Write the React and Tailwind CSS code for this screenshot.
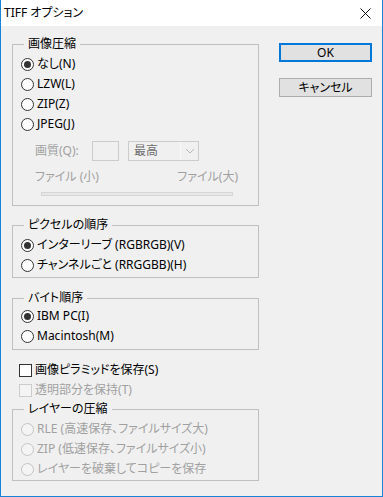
import React from 'react';

const font = "font-['Noto_Sans','Noto_Sans_CJK_JP',sans-serif] [font-feature-settings:'palt']";

const Radio = ({ checked, disabled, label }) => (
  <div className="flex h-[20px] items-center">
    <span
      className={`flex h-[13px] w-[13px] items-center justify-center rounded-full border ${
        disabled ? 'border-[#c4c4c4] bg-[#f4f4f4]' : 'border-[#333333] bg-white'
      }`}
    >
      {checked && <span className="h-[7px] w-[7px] rounded-full bg-[#333333]" />}
    </span>
    <span className={`ml-[3px] text-[12px] leading-[16px] ${disabled ? 'text-[#a0a0a0]' : 'text-black'}`}>{label}</span>
  </div>
);

const Check = ({ disabled, label }) => (
  <div className="flex h-[20px] items-center">
    <span
      className={`h-[13px] w-[13px] border ${disabled ? 'border-[#cccccc] bg-[#f4f4f4]' : 'border-[#333333] bg-white'}`}
    />
    <span className={`ml-[3px] text-[12px] leading-[16px] ${disabled ? 'text-[#a0a0a0]' : 'text-black'}`}>{label}</span>
  </div>
);

const Group = ({ title, className = '', children }) => (
  <fieldset className={`border border-[#c0c0c0] pl-[8px] pr-[8px] ${className}`}>
    <legend className="ml-[3px] px-[4px] text-[12px] leading-[16px] text-black">{title}</legend>
    {children}
  </fieldset>
);

export default function App() {
  return (
    <div className={`${font} flex h-[497px] w-[383px] flex-col border-x border-b border-[#1883d7] bg-[#f0f0f0]`}>
      <div className="flex h-[26px] shrink-0 items-center justify-between bg-white pl-[3px] pr-[10px]">
        <span className="text-[12px] text-black">TIFF オプション</span>
        <svg width="11" height="11" viewBox="0 0 11 11" className="mr-[1px]">
          <path d="M0.5 0.5 L10.5 10.5 M10.5 0.5 L0.5 10.5" stroke="#111" strokeWidth="1" />
        </svg>
      </div>

      <div className="flex pl-[11px]">
        <div className="w-[247px]">
          <Group title="画像圧縮" className="mt-[10px] pb-[9px]">
            <div className="mt-[2px]">
              <Radio checked label="なし(N)" />
              <Radio label="LZW(L)" />
              <Radio label="ZIP(Z)" />
              <Radio label="JPEG(J)" />
            </div>
            <div className="mt-[7px] flex h-[20px] items-center pl-[14px]">
              <span className="w-[57px] text-[12px] text-[#a0a0a0]">画質(Q):</span>
              <span className="h-[20px] w-[27px] border border-[#cccccc] bg-[#f0f0f0]" />
              <div className="ml-[9px] flex h-[20px] w-[71px] items-center border border-[#cccccc] bg-[#f0f0f0]">
                <span className="flex h-[18px] w-[52px] items-center border-r border-[#f8f8f8] pl-[5px] text-[12px] text-[#6d6d6d]">最高</span>
                <svg width="10" height="6" viewBox="0 0 10 6" className="ml-[4px]">
                  <path d="M1 1 L5 5 L9 1" fill="none" stroke="#b8b8b8" strokeWidth="1" />
                </svg>
              </div>
            </div>
            <div className="mt-[8px] flex justify-between pl-[14px] pr-[12px] text-[12px] leading-[16px] text-[#a0a0a0]">
              <span>ファイル (小)</span>
              <span>ファイル(大)</span>
            </div>
            <div className="ml-[20px] mr-[17px] mt-[7px] h-[4px] border border-[#d6d6d6] bg-[#e7e7e7]" />
          </Group>

          <Group title="ピクセルの順序" className="mt-[11px] pb-[2px]">
            <div className="mt-[2px]">
              <Radio checked label="インターリーブ (RGBRGB)(V)" />
              <Radio label="チャンネルごと (RRGGBB)(H)" />
            </div>
          </Group>

          <Group title="バイト順序" className="mt-[12px] pb-[3px]">
            <Radio checked label="IBM PC(I)" />
            <Radio label="Macintosh(M)" />
          </Group>

          <div className="mt-[10px] pl-[7px]">
            <Check label="画像ピラミッドを保存(S)" />
            <Check disabled label="透明部分を保持(T)" />
          </div>

          <Group title="レイヤーの圧縮" className="mt-[1px] pb-[1px]">
            <div className="mt-[2px]">
              <Radio disabled label="RLE (高速保存、ファイルサイズ大)" />
              <Radio disabled label="ZIP (低速保存、ファイルサイズ小)" />
              <Radio disabled label="レイヤーを破棄してコピーを保存" />
            </div>
          </Group>
        </div>

        <div className="ml-[20px] mt-[17px] flex w-[93px] flex-col gap-[16px]">
          <button className="h-[19px] border-2 border-[#0078d7] bg-[#e1e1e1] text-[12px] leading-[14px] text-black">OK</button>
          <button className="h-[19px] border border-[#adadad] bg-[#e1e1e1] text-[12px] leading-[16px] text-black">キャンセル</button>
        </div>
      </div>
    </div>
  );
}
